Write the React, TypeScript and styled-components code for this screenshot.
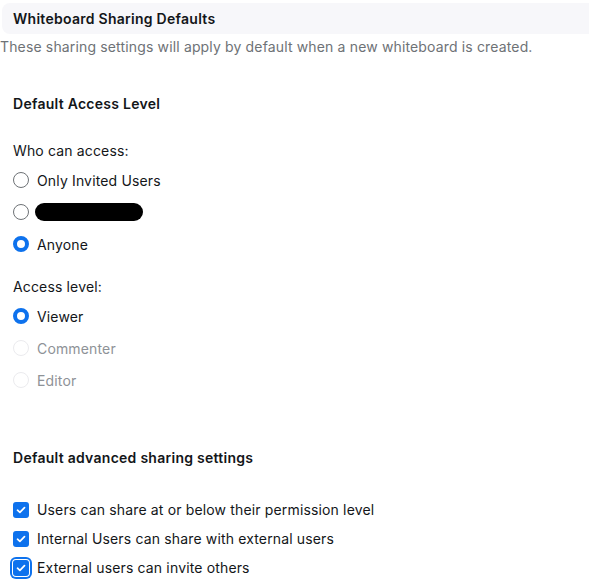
import styled, { createGlobalStyle, css } from 'styled-components';

const GlobalStyle = createGlobalStyle`
  html, body {
    margin: 0;
    padding: 0;
    background: #ffffff;
  }
  body {
    font-family: Inter, "Noto Sans", "Liberation Sans", sans-serif;
    font-size: 14px;
    letter-spacing: 0.15px;
    color: #131619;
  }
`;

const Page = styled.div`
  width: 589px;
  overflow: hidden;
`;

const Header = styled.div`
  display: flex;
  align-items: center;
  height: 31px;
  margin: 3px 0 0 2px;
  padding-left: 11px;
  background: #f7f7fa;
  border-radius: 8px 0 0 8px;
  font-weight: 600;
  font-size: 14px;
  letter-spacing: 0.27px;
`;

const Subtitle = styled.p`
  margin: 3px 0 0;
  line-height: 20px;
  color: #6e7276;
`;

const Body = styled.div`
  padding-left: 13px;
`;

const SectionTitle = styled.h3<{ $top: number }>`
  margin: ${(p) => p.$top}px 0 0;
  font-size: 14px;
  font-weight: 600;
  line-height: 20px;
  letter-spacing: 0.27px;
`;

const FieldLabel = styled.div<{ $top: number }>`
  margin-top: ${(p) => p.$top}px;
  line-height: 20px;
`;

const OptionList = styled.div<{ $top: number }>`
  display: flex;
  flex-direction: column;
  margin-top: ${(p) => p.$top}px;
`;

const Option = styled.label<{ $height: number; $disabled?: boolean }>`
  display: flex;
  align-items: center;
  gap: 8px;
  height: ${(p) => p.$height}px;
  color: ${(p) => (p.$disabled ? '#8e9297' : '#131619')};
`;

const Radio = styled.span<{ $checked?: boolean; $disabled?: boolean }>`
  box-sizing: border-box;
  width: 16px;
  height: 16px;
  border-radius: 50%;
  flex: none;
  background: #fff;
  border: 1px solid #6e7276;
  ${(p) =>
    p.$checked &&
    css`
      border: 4px solid #0e72ed;
    `}
  ${(p) =>
    p.$disabled &&
    css`
      border-color: #ebebee;
    `}
`;

const Redacted = styled.span`
  display: inline-block;
  width: 108px;
  height: 18px;
  margin-left: -2px;
  background: #000;
  border-radius: 9px;
`;

const CheckWrap = styled.span<{ $focused?: boolean }>`
  display: flex;
  align-items: center;
  justify-content: center;
  width: 16px;
  height: 16px;
  flex: none;
  border-radius: 3px;
  background: #0e72ed;
  ${(p) =>
    p.$focused &&
    css`
      box-shadow: 0 0 0 1px #fff, 0 0 0 3px #0e72ed;
    `}
`;

function Check({ focused }: { focused?: boolean }) {
  return (
    <CheckWrap $focused={focused}>
      <svg width="10" height="8" viewBox="0 0 10 8" fill="none">
        <path d="M1.5 4.2 L3.9 6.4 L8.5 1.6" stroke="#fff" strokeWidth="1.7" strokeLinecap="round" strokeLinejoin="round" />
      </svg>
    </CheckWrap>
  );
}

export default function App() {
  return (
    <Page>
      <GlobalStyle />
      <Header>Whiteboard Sharing Defaults</Header>
      <Subtitle>These sharing settings will apply by default when a new whiteboard is created.</Subtitle>
      <Body>
        <SectionTitle $top={37}>Default Access Level</SectionTitle>

        <FieldLabel $top={27}>Who can access:</FieldLabel>
        <OptionList $top={3}>
          <Option $height={32}>
            <Radio />
            Only Invited Users
          </Option>
          <Option $height={32}>
            <Radio />
            <Redacted />
          </Option>
          <Option $height={32}>
            <Radio $checked />
            Anyone
          </Option>
        </OptionList>

        <FieldLabel $top={17}>Access level:</FieldLabel>
        <OptionList $top={3}>
          <Option $height={32}>
            <Radio $checked />
            Viewer
          </Option>
          <Option $height={32} $disabled>
            <Radio $disabled />
            Commenter
          </Option>
          <Option $height={32} $disabled>
            <Radio $disabled />
            Editor
          </Option>
        </OptionList>

        <SectionTitle $top={52}>Default advanced sharing settings</SectionTitle>
        <OptionList $top={27}>
          <Option $height={29}>
            <Check />
            Users can share at or below their permission level
          </Option>
          <Option $height={29}>
            <Check />
            Internal Users can share with external users
          </Option>
          <Option $height={29}>
            <Check focused />
            External users can invite others
          </Option>
        </OptionList>
      </Body>
    </Page>
  );
}
